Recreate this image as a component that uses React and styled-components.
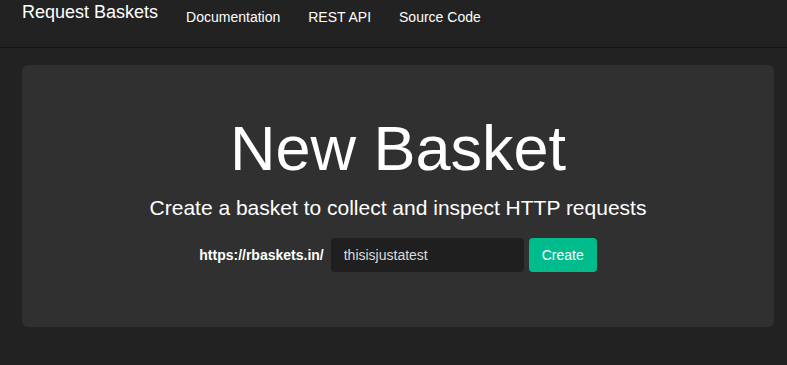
import React from 'react';
import styled, { createGlobalStyle } from 'styled-components';

const Global = createGlobalStyle`
    html, body {
        margin: 0;
        padding: 0;
        background-color: #222222;
        font-family: "Liberation Sans", Arial, sans-serif;
        color: #ffffff;
    }
`

const Nav = styled.nav`
    height: 47px;
    border-bottom: 1px solid #151515;
    background-color: #222222;
    display: flex;
    align-items: flex-start;
    padding-left: 22px;
`
const Brand = styled.div`
    font-size: 18px;
    line-height: 22px;
    margin-top: 1px;
    color: #ffffff;
`
const NavLinks = styled.div`
    display: flex;
    margin-left: 14px;
    margin-top: 9px;
`
const NavLink = styled.a`
    font-size: 14px;
    line-height: 16px;
    color: #ffffff;
    text-decoration: none;
    padding: 0 14px;
`
const Page = styled.main`
    padding: 17px 13px 0 22px;
`
const Card = styled.section`
    height: 262px;
    background-color: #303030;
    border-radius: 6px;
    display: flex;
    flex-direction: column;
    align-items: center;
    padding-top: 46px;
    box-sizing: border-box;
`
const Title = styled.h1`
    font-size: 63px;
    font-weight: 400;
    line-height: 74px;
    margin: 0;
    color: #ffffff;
`
const Lead = styled.p`
    font-size: 21px;
    line-height: 24px;
    margin: 11px 0 0 0;
    color: #ffffff;
`
const Form = styled.form`
    display: flex;
    align-items: center;
    margin-top: 18px;
`
const Label = styled.label`
    font-size: 14px;
    font-weight: bold;
    margin-right: 7px;
    color: #ffffff;
`
const Input = styled.input`
    width: 193px;
    height: 34px;
    box-sizing: border-box;
    background-color: #1f1f1f;
    border: none;
    border-radius: 4px;
    color: #dddddd;
    font-family: "Liberation Sans", Arial, sans-serif;
    font-size: 14px;
    padding: 0 13px;
    outline: none;
`
const Button = styled.button`
    height: 34px;
    margin-left: 5px;
    padding: 0 13px;
    background-color: #00bc8c;
    border: none;
    border-radius: 4px;
    color: #ffffff;
    font-family: "Liberation Sans", Arial, sans-serif;
    font-size: 14px;
`

export default function App() {
    return (
        <>
            <Global />
            <Nav>
                <Brand>Request Baskets</Brand>
                <NavLinks>
                    <NavLink href="#">Documentation</NavLink>
                    <NavLink href="#">REST API</NavLink>
                    <NavLink href="#">Source Code</NavLink>
                </NavLinks>
            </Nav>
            <Page>
                <Card>
                    <Title>New Basket</Title>
                    <Lead>Create a basket to collect and inspect HTTP requests</Lead>
                    <Form onSubmit={e => e.preventDefault()}>
                        <Label>https://rbaskets.in/</Label>
                        <Input defaultValue="thisisjustatest" />
                        <Button type="submit">Create</Button>
                    </Form>
                </Card>
            </Page>
        </>
    );
}
